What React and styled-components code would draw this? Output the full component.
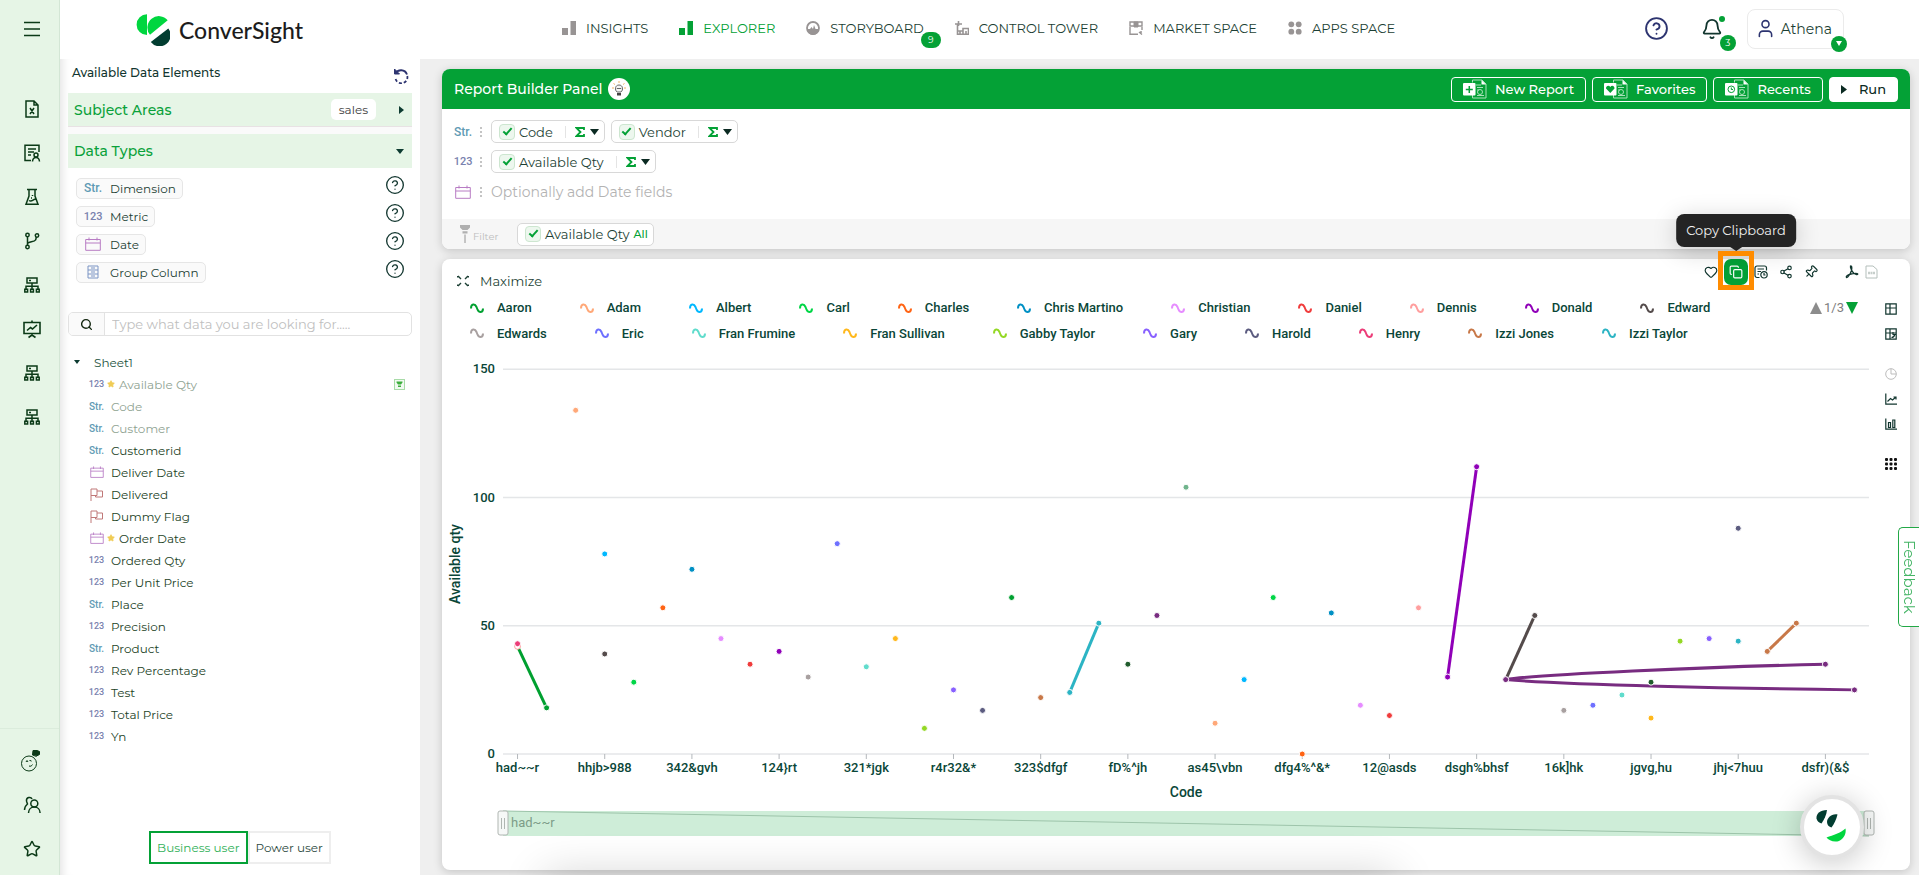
import React from "react"
import styled, { createGlobalStyle } from "styled-components"
import {
  Bell,
  CircleHelp,
  Copy,
  Heart,
  Pin,
  Search,
  Share2,
  Star,
  User,
} from "lucide-react"

const GlobalStyle = createGlobalStyle`
  *, *::before, *::after {
    box-sizing: border-box;
  }
  body {
    background: #efefef;
    color: #1c3f34;
    font-family: Montserrat, Inter, sans-serif;
    font-size: 12px;
    margin: 0;
  }
  button, input {
    color: inherit;
    font: inherit;
  }
  button {
    background: none;
    border: 0;
    cursor: pointer;
    padding: 0;
  }
  a {
    color: inherit;
    text-decoration: none;
  }
  ul {
    list-style: none;
    margin: 0;
    padding: 0;
  }
  svg {
    display: block;
    flex: none;
  }
`

const Layout = styled.div`
  display: grid;
  grid-template-columns: 60px 360px minmax(0, 1fr);
  grid-template-rows: 59px 1fr;
  min-height: 100vh;
`

/* ---------- icon rail ---------- */

const Rail = styled.nav`
  align-items: center;
  background: #e6f5e6;
  border-right: 1px solid #d3e6d5;
  color: #0b3a17;
  display: flex;
  flex-direction: column;
  grid-row: 1 / 3;
  padding: 7px 0 4px 4px;
`

const RailButton = styled.button`
  align-items: center;
  display: flex;
  height: 44px;
  justify-content: center;
  width: 44px;
`

const RailGroup = styled.div`
  display: flex;
  flex-direction: column;
  margin-top: 36px;
`

const RailFooter = styled.div`
  align-items: center;
  border-top: 1px solid #dbecdc;
  display: flex;
  flex-direction: column;
  margin: auto 0 0 -4px;
  padding: 10px 0 0 4px;
  width: 59px;
`

/* ---------- top header ---------- */

const Header = styled.header`
  align-items: center;
  background: white;
  display: flex;
  grid-column: 2 / 4;
  padding: 0 75px 0 76px;
`

const Brand = styled.a`
  align-items: center;
  color: #1c1c1c;
  display: flex;
  flex: 0 1 426px;
  font-family: Lato, sans-serif;
  font-size: 23px;
  font-weight: 500;
  gap: 9px;
  line-height: 30px;
`

const Nav = styled.nav`
  display: flex;
  font-size: 13px;
  gap: 31px;
  margin-top: -4px;
`

const NavLink = styled.a`
  align-items: center;
  color: ${({ $active }) => ($active ? `#04a136` : `#1c3f34`)};
  display: flex;
  gap: 10px;
  position: relative;
  white-space: nowrap;
  svg {
    color: ${({ $active }) => ($active ? `#04a136` : `#989494`)};
  }
`

const Badge = styled.span`
  align-items: center;
  background: #04a136;
  border-radius: 8px;
  color: white;
  display: flex;
  font-size: 9px;
  height: 16px;
  justify-content: center;
  position: absolute;
  right: ${({ $right }) => $right}px;
  top: ${({ $top }) => $top}px;
  width: ${({ $wide }) => ($wide ? 20 : 16)}px;
`

const Actions = styled.div`
  align-items: center;
  display: flex;
  gap: 32px;
  margin-left: auto;
  margin-top: -2px;
`

const IconButton = styled.button`
  color: ${({ $color }) => $color || `#12362f`};
  position: relative;
`

const Dot = styled.span`
  background: #04a136;
  border-radius: 50%;
  height: 6px;
  position: absolute;
  right: -2px;
  top: -2px;
  width: 6px;
`

const UserBox = styled.button`
  align-items: center;
  border: 1px solid #ebebeb;
  border-radius: 8px;
  color: #1c3f34;
  display: flex;
  font-size: 14px;
  gap: 5px;
  height: 40px;
  margin-left: -8px;
  padding: 0 11px 0 7px;
  position: relative;
`

/* ---------- left panel ---------- */

const Panel = styled.aside`
  background: white;
  box-shadow: inset 10px 0 10px -8px rgba(0, 0, 0, 0.12);
  display: flex;
  flex-direction: column;
  padding: 0 8px 11px;
`

const PanelTitle = styled.div`
  align-items: center;
  color: #12362f;
  display: flex;
  font-size: 12px;
  font-weight: 500;
  height: 34px;
  justify-content: space-between;
  padding: 0 3px 0 4px;
  h2 {
    font: inherit;
    margin: 0 0 8px;
  }
`

const Section = styled.button`
  align-items: center;
  background: #e6f5e6;
  color: #0aa13a;
  display: flex;
  font-size: 14px;
  font-weight: 500;
  gap: 23px;
  height: ${({ $tall }) => ($tall ? 34 : 33)}px;
  justify-content: space-between;
  padding: 0 8px 0 6px;
  text-align: left;
  width: 100%;
`

const SectionGap = styled.div`
  background: #fafafa;
  border-top: 1px solid #e8e2e4;
  height: 8px;
`

const Area = styled.span`
  background: white;
  border-radius: 5px;
  color: #3d3d3d;
  font-size: 12px;
  font-weight: 400;
  line-height: 21px;
  margin-left: auto;
  padding: 0 8px;
`

const Types = styled.ul`
  display: grid;
  gap: 6px;
  padding: 6px 7px 0 8px;
  li {
    align-items: center;
    display: flex;
    height: 22px;
    justify-content: space-between;
  }
`

const TypeChip = styled.span`
  align-items: center;
  background: #fafafa;
  border: 1px solid #e6e6e6;
  border-radius: 5px;
  display: flex;
  font-size: 12px;
  gap: 8px;
  height: 21px;
  margin-top: 6px;
  padding: 0 6px 0 7px;
`

const TypeIcon = styled.span`
  color: ${({ $color }) => $color};
  display: flex;
  flex: none;
  font-family: Roboto, sans-serif;
  font-size: ${({ $size }) => $size}px;
  font-weight: 500;
  justify-content: center;
  width: ${({ $small }) => ($small ? 15 : 18)}px;
`

const SearchBox = styled.label`
  align-items: center;
  border: 1px solid #e2e2e2;
  border-radius: 5px;
  display: flex;
  height: 24px;
  margin: 32px 0 15px;
  overflow: hidden;
  span {
    align-items: center;
    background: #fafafa;
    border-right: 1px solid #e2e2e2;
    color: #12260f;
    display: flex;
    height: 100%;
    justify-content: center;
    width: 36px;
  }
  input {
    border: 0;
    flex: 1;
    font-size: 13px;
    min-width: 0;
    outline: 0;
    padding: 0 7px;
  }
  input::placeholder {
    color: #c0c0c0;
  }
`

const Tree = styled.ul`
  li {
    align-items: center;
    color: #23431f;
    display: flex;
    gap: 7px;
    height: 22px;
    padding: 0 7px 0 21px;
  }
  li.muted {
    color: #8fa392;
  }
  li > svg:last-child {
    margin-left: auto;
  }
`

const Sheet = styled.button`
  align-items: center;
  color: #1c5341;
  display: flex;
  gap: 14px;
  height: 22px;
  padding-left: 6px;
`

const Starred = styled.span`
  align-items: center;
  display: flex;
  gap: 4px;
  margin-left: -4px;
`

const Modes = styled.div`
  display: flex;
  justify-content: center;
  margin-top: auto;
`

const Mode = styled.button`
  border: 2px solid ${({ $active }) => ($active ? `#04a136` : `#eeeeee`)};
  color: ${({ $active }) => ($active ? `#2fb058` : `#2c4a41`)};
  height: 33px;
  padding: 0 6px;
`

/* ---------- report builder ---------- */

const Main = styled.main`
  display: flex;
  flex-direction: column;
  gap: 10px;
  min-width: 0;
  padding: 10px 9px 5px 22px;
`

const Card = styled.section`
  background: white;
  border-radius: 8px;
  box-shadow: 0 2px 10px rgba(0, 0, 0, 0.18);
`

const BuilderBar = styled.div`
  align-items: center;
  background: #04a136;
  border-radius: 8px 8px 0 0;
  color: white;
  display: flex;
  font-size: 13px;
  font-weight: 500;
  gap: 6px;
  height: 40px;
  padding: 0 12px;
  h1 {
    font: inherit;
    font-size: 14px;
    margin: 0;
  }
`

const Hint = styled.button`
  align-items: center;
  background: white;
  border-radius: 50%;
  display: flex;
  height: 22px;
  justify-content: center;
  margin-right: auto;
  width: 22px;
`

const BarButton = styled.button`
  align-items: center;
  background: ${({ $solid }) => ($solid ? `white` : `transparent`)};
  border: 1px solid white;
  border-radius: 4px;
  color: ${({ $solid }) => ($solid ? `#0b2a22` : `white`)};
  display: flex;
  gap: ${({ $solid }) => ($solid ? 12 : 8)}px;
  height: 25px;
  padding: 0 11px;
`

const Fields = styled.div`
  display: grid;
  gap: 7px;
  padding: 11px 12px 16px;
`

const FieldRow = styled.div`
  align-items: center;
  display: flex;
  gap: 6px;
  height: 23px;
`

const Grip = styled.span`
  border-left: 2px dotted #c4c4c4;
  height: 10px;
  margin: 0 3px 0 2px;
`

const Chip = styled.span`
  align-items: center;
  background: white;
  border: 1px solid #d8d8d8;
  border-radius: 5px;
  color: #1c3f34;
  display: flex;
  font-size: 13px;
  gap: 4px;
  height: 23px;
  padding: 0 5px 0 7px;
  input {
    appearance: none;
    background: #edf7ee;
    border: 1px solid #cde6d0;
    border-radius: 4px;
    display: grid;
    height: 16px;
    margin: 0;
    place-items: center;
    width: 16px;
  }
  input:checked::after {
    border: solid #04a136;
    border-width: 0 2px 2px 0;
    content: "";
    height: 9px;
    margin-bottom: 3px;
    transform: rotate(42deg);
    width: 5px;
  }
`

const Aggregate = styled.button`
  align-items: center;
  border-left: 1px solid #e4e4e4;
  color: #04a136;
  display: flex;
  gap: 5px;
  height: 12px;
  margin-left: 8px;
  padding-left: 9px;
`

const DateInput = styled.input`
  border: 0;
  flex: 1;
  font-size: 14px;
  height: 23px;
  outline: 0;
  padding: 0;
  &::placeholder {
    color: #b3b3b3;
  }
`

const FilterBar = styled.div`
  align-items: center;
  background: #f6f6f6;
  border-radius: 0 0 8px 8px;
  display: flex;
  height: 30px;
  padding: 0 16px 0 17px;
`

const FilterLabel = styled.span`
  color: #bdbdbd;
  display: flex;
  font-size: 10px;
  gap: 2px;
  width: 58px;
  span {
    align-self: flex-end;
  }
`

const All = styled.span`
  color: #04a136;
  font-size: 11px;
  font-weight: 500;
`

/* ---------- chart card ---------- */

const ChartCard = styled(Card)`
  flex: 1;
  padding-bottom: 16px;
`

const ChartTop = styled.div`
  display: flex;
  height: 36px;
  justify-content: space-between;
  padding: 0 32px 0 15px;
`

const Maximize = styled.button`
  align-items: center;
  display: flex;
  font-size: 13px;
  gap: 11px;
  height: 44px;
`

const Tools = styled.div`
  align-items: center;
  color: #0f3b32;
  display: flex;
  gap: 11px;
  height: 26px;
`

const Exports = styled.div`
  display: flex;
  gap: 5px;
  margin-left: 16px;
`

const CopyButton = styled.button`
  align-items: center;
  background: #04a136;
  border-radius: 7px;
  color: white;
  display: flex;
  height: 26px;
  justify-content: center;
  margin: 0 -5px;
  position: relative;
  width: 24px;
  &::after {
    border: 5px solid #ff8c00;
    content: "";
    inset: -8px -6px -5px;
    position: absolute;
  }
`

const Tooltip = styled.span`
  background: #242424;
  border-radius: 8px;
  bottom: 38px;
  box-shadow: 0 4px 24px rgba(0, 0, 0, 0.18);
  color: #f2f2f2;
  font-size: 13px;
  left: 50%;
  line-height: 33px;
  padding: 0 10px;
  position: absolute;
  transform: translateX(-50%);
  white-space: nowrap;
  &::after {
    border: 6px solid transparent;
    border-bottom: 0;
    border-top: 4px solid #242424;
    content: "";
    left: 50%;
    margin-left: -6px;
    position: absolute;
    top: 100%;
  }
`

const ChartBody = styled.div`
  display: grid;
  grid-template-columns: minmax(0, 1fr) 34px;
`

const ChartArea = styled.div`
  color: #0a4638;
  font-family: Roboto, sans-serif;
`

const LegendBar = styled.div`
  align-items: flex-start;
  display: flex;
  gap: 10px;
  justify-content: space-between;
  padding: 0 18px 0 28px;
`

const Legend = styled.ul`
  column-gap: 48px;
  display: flex;
  flex-wrap: wrap;
  font-size: 13px;
  font-weight: 500;
  height: 51px;
  max-width: 1310px;
  overflow: hidden;
`

const LegendItem = styled.button`
  align-items: center;
  display: flex;
  gap: 13px;
  height: 25px;
  svg {
    color: ${({ $color }) => $color};
  }
`

const Pager = styled.div`
  align-items: center;
  color: #7d7d7d;
  display: flex;
  font-size: 13px;
  gap: 2px;
  height: 25px;
`

const Chart = styled.svg`
  height: auto;
  width: 100%;
  text {
    fill: #0a4638;
    font-size: 13px;
    font-weight: 500;
    text-anchor: middle;
  }
  .value {
    text-anchor: end;
  }
  .title {
    font-size: 14px;
  }
  .range {
    fill: #7d9c88;
    font-weight: 400;
    text-anchor: start;
  }
`

const ChartTypes = styled.div`
  align-items: center;
  color: #21493f;
  display: flex;
  flex-direction: column;
  gap: 13px;
  padding: 8px 4px 0 0;
`

const TypeGroup = styled.div`
  display: grid;
  gap: 13px;
  margin-bottom: 15px;
  button:disabled {
    color: #bdbdbd;
  }
`

const Feedback = styled.button`
  background: white;
  border: 1px solid #22a846;
  border-radius: 5px 0 0 5px;
  border-right: 0;
  color: #45b566;
  font-size: 15px;
  height: 100px;
  position: fixed;
  right: 0;
  top: 527px;
  width: 21px;
  writing-mode: vertical-rl;
`

const Assistant = styled.button`
  align-items: center;
  background: white;
  border: 4px solid #e3e3e3;
  border-radius: 50%;
  bottom: 16px;
  box-shadow: 0 4px 30px rgba(0, 0, 0, 0.22);
  display: flex;
  height: 64px;
  justify-content: center;
  position: fixed;
  right: 55px;
  width: 64px;
`

const BottomShade = styled.div`
  bottom: -16px;
  box-shadow: 0 0 44px 12px rgba(0, 0, 0, 0.24);
  height: 1px;
  left: 29%;
  pointer-events: none;
  position: fixed;
  right: 28%;
`

/* ---------- icons ---------- */

const Line = ({ size = 16, box = 16, width = 1.5, children }) => (
  <svg
    width={size}
    height={size}
    viewBox={`0 0 ${box} ${box}`}
    fill="none"
    stroke="currentColor"
    strokeWidth={width}
    aria-hidden="true"
  >
    {children}
  </svg>
)

const Caret = ({ dir = `down`, w = 8, h = 5, color = `#0d3b30` }) => {
  const d = {
    down: `M0 0H${w}L${w / 2} ${h}Z`,
    up: `M0 ${h}H${w}L${w / 2} 0Z`,
    right: `M0 0L${w} ${h / 2}L0 ${h}Z`,
  }[dir]
  return (
    <svg width={w} height={h} aria-hidden="true"><path d={d} fill={color} /></svg>
  )
}

const FileXIcon = () => (
  <Line size={18} box={18}>
    <path d="M3 1h8l4 4v12H3ZM11 1v4h4M7 8l4 6M11 8l-4 6" />
  </Line>
)

const ReportIcon = () => (
  <Line size={18} box={18}>
    <path d="M8 16.500H2V1.200h14V8M5 5h8M5 8h6M5 11h3" />
    <circle cx="13" cy="11" r="2" />
    <path d="M9.500 17.500c.2-2.500 1.500-4 3.500-4s3.300 1.500 3.500 4" />
  </Line>
)

const FlaskIcon = () => (
  <Line size={18} box={18}>
    <path d="M4 1.500h10M6 2v6L3 16.300h12L12 8V2M6 12.500c3 2 4-1.500 7-1.500" />
    <path d="M9.500 7v1M8 10h1" />
  </Line>
)

const BranchIcon = () => (
  <Line size={18} box={18}>
    <circle cx="4.500" cy="3" r="1.700" />
    <circle cx="4.500" cy="15" r="1.700" />
    <circle cx="14" cy="3.500" r="1.700" />
    <path d="M4.500 5v8M4.500 11.500c.5-2 7-1.500 8-3.500.6-1 .7-2 .8-3" />
  </Line>
)

const NetworkIcon = () => (
  <Line size={18} box={18}>
    <path d="M4 2h10v5H4ZM6 4.500h2M9 7v6M3 13v-2.800h12V13" />
    <path d="M1.800 13.200h2.800v2.800H1.800ZM7.600 13.200h2.800v2.800H7.600ZM13.400 13.200h2.800v2.800h-2.800Z" />
  </Line>
)

const BoardIcon = () => (
  <Line size={20} box={20} width={1.6}>
    <path d="M2 3.500h16v11H2ZM10 1.500v2M5 11.500l3.500-3 2 1.500L15 6M10 14.500v2M6.500 18.500l3.500-2.500 3.500 2.500" />
  </Line>
)

const RobotIcon = () => (
  <Line size={24} box={24} width={1}>
    <circle cx="9" cy="14.500" r="7.500" />
    <path d="M6 13l1-1.500 1 1.500M9.500 12l1-1 .7 1.500M9 17c1.500.6 2.800 0 3.500-1.500" />
    <path d="M12.500 6l.5-4.500h4l2.500 1v3l-3 1.500M12.500 6l4 1.500" fill="currentColor" />
  </Line>
)

const PeopleIcon = () => (
  <Line size={18} box={18}>
    <circle cx="11.300" cy="7.500" r="3.500" />
    <path d="M5.500 17c0-3.500 2.500-6 5.800-6s5.800 2.500 5.800 6M9 3c-1-2.500-6-2-5.500 2 .2 1.500 1 2.500 1 3C2 10 1.500 12 1.500 14" />
  </Line>
)

const CalendarIcon = ({ small }) => (
  <svg width={small ? 14 : 16} height={small ? 12 : 14} viewBox="0 0 16 14" fill="none" stroke="#b87cc4" aria-hidden="true">
    <path d="M.7 2.500h14.600v10.800H.7ZM.7 6h14.600M4 .5v3M12 .5v3" />
  </svg>
)

const FlagIcon = () => (
  <svg width="14" height="13" viewBox="0 0 14 13" fill="none" stroke="#c07878" aria-hidden="true">
    <path d="M1 13V1h6v6.500H1M7 3h5.500v6H5.500V7.500" />
  </svg>
)

const GroupIcon = () => (
  <svg width="12" height="14" viewBox="0 0 12 14" fill="none" stroke="#7b94c4" aria-hidden="true">
    <path d="M1 1h10v12H1ZM1 5h10M1 9h10M4 3h4M4 7h4M4 11h4" />
  </svg>
)

const ResetIcon = () => (
  <svg width="16" height="16" viewBox="0 0 16 16" fill="none" stroke="#2d3470" strokeWidth="1.800" aria-hidden="true">
    <path d="M2 5.500C5 1 12 1 14 6.500" />
    <path d="M14.300 8A6 6 0 0 1 2.500 10.500" strokeDasharray="3 2" />
    <path d="M1.500 1v5h5Z" fill="#2d3470" strokeWidth="1" />
  </svg>
)

const FunnelIcon = () => (
  <svg width="12" height="18" viewBox="0 0 12 18" fill="#b0b0b0" aria-hidden="true">
    <path d="M1 0h10v2.500L8.500 5h-5L1 2.500ZM3.500 6.200h5v2.300H3.500ZM5.300 9.500h1.400V18H5.300Z" />
  </svg>
)

const BulbIcon = () => (
  <svg width="14" height="16" viewBox="0 0 14 16" fill="none" aria-hidden="true">
    <path d="M7 0v2M1.500 2.500l1.500 1M12.500 2.500L11 3.500M0 7h2M12 7h2" stroke="#f0b469" />
    <path d="M5 11C2.500 9 3 4 7 4s4.500 5 2 7Z" stroke="#666" fill="#f4f4f4" />
    <path d="M4.800 7.500h4.400" stroke="#666" />
    <path d="M5 12h4v2.500H5Z" fill="#444" />
  </svg>
)

// two overlapping sheets, the front one carries a small mark
const SheetsIcon = ({ children }) => (
  <svg width="24" height="20" viewBox="0 0 24 20" fill="none" aria-hidden="true">
    <path d="M9.500 3.500V1H19l4 4v14H9.500v-3" stroke="#a9e0b9" />
    <path d="M18.500 1v4.500H23Z" fill="white" />
    <path d="M13 6h5M14 8.500h6M14 11h2M14 16.500h7" stroke="#a9e0b9" />
    <circle cx="17" cy="13" r="2.500" stroke="#a9e0b9" />
    <rect x="0" y="4" width="12.500" height="12.500" rx="1" fill="white" />
    {children}
  </svg>
)

const Sine = () => (
  <svg width="14" height="10" viewBox="0 0 14 10" fill="none" stroke="currentColor" strokeWidth="2" aria-hidden="true">
    <path d="M1 5.500C1 .5 5 .5 6.500 4C8 8 8.500 9 10.300 9C12.200 9 13 7.500 13 5.500" />
  </svg>
)

const LogoMark = () => (
  <svg width="34" height="32" viewBox="0 0 34 32" aria-hidden="true">
    <path d="M11 .3A10.400 10.400 0 0 0 11 21.100Z" fill="#00d63f" />
    <path d="M14 20.800A11 11 0 0 1 31.700 6.300Z" fill="#00d63f" />
    <path d="M14.800 28A11 11 0 0 0 32.300 14.500Z" fill="#023d31" />
  </svg>
)

const AssistantMark = () => (
  <svg width="32" height="34" viewBox="0 0 32 34" aria-hidden="true">
    <path d="M11 0C4 0 0 4 .5 8.500 1 11 3 13 5.500 13.500 8 10 10.500 5 11 0Z" fill="#023d31" />
    <path d="M21.500 4.500C15.500 3.500 11 8 11 12c0 3 2 5 4.500 5.500C18 14 20.500 9 21.500 4.500Z" fill="#023d31" />
    <path d="M10.500 27.500C17.500 25 24.500 23 29.500 18.500c1 5-1.500 10-6.500 12.500-5 1.500-10.500-.5-12.500-3.500Z" fill="#00d63f" />
  </svg>
)

const BarsIcon = () => (
  <svg width="14" height="14" viewBox="0 0 14 14" fill="currentColor" aria-hidden="true">
    <path d="M0 7h6v7H0ZM8.500 0H14v14H8.500Z" />
  </svg>
)

const GaugeIcon = () => (
  <svg width="14" height="14" viewBox="0 0 14 14" fill="none" aria-hidden="true">
    <circle cx="7" cy="7" r="6" stroke="currentColor" strokeWidth="1.800" />
    <path d="M1 8h3l1.500-2L7 8l1-4 1.500 4H13A6 6 0 0 1 1 8Z" fill="currentColor" />
  </svg>
)

const TowerIcon = () => (
  <svg width="14" height="14" viewBox="0 0 14 14" fill="none" stroke="currentColor" aria-hidden="true">
    <path d="M0 3h7M3.500 0v5M2.500 3v10.300h11V7.500H8V10H2.500M5 10v3M8 10v3M11 10v3" strokeWidth="1.600" />
  </svg>
)

const MarketIcon = () => (
  <svg width="14" height="14" viewBox="0 0 14 14" fill="none" stroke="currentColor" aria-hidden="true">
    <path d="M1 6v7.300h8M1 1h12v4H1ZM13 6v3M10 11l3 2.500M13 11h-2" strokeWidth="1.400" />
    <path d="M5 1h4v5H5Z" fill="currentColor" />
  </svg>
)

const AppsIcon = () => (
  <svg width="14" height="14" viewBox="0 0 14 14" fill="currentColor" aria-hidden="true">
    <circle cx="3.300" cy="3.300" r="2.900" />
    <circle cx="10.700" cy="3.300" r="2.900" />
    <circle cx="3.300" cy="10.700" r="2.900" />
    <circle cx="10.700" cy="10.700" r="2.900" />
  </svg>
)

const CollapseIcon = () => (
  <Line size={12} box={12} width={1.4}>
    <path d="M1 1l3 3M11 1L8 4M1 11l3-3M11 11L8 8" />
    <path d="M.7 2.500V1M11.300 2.500V1M.7 9.500V11M11.300 9.500V11" />
  </Line>
)

const ScheduleIcon = () => (
  <Line size={14} box={14} width={1.2}>
    <path d="M5.500 12.500H3a2 2 0 0 1-2-2V3a2 2 0 0 1 2-2h7.500a2 2 0 0 1 2 2v2.500M3.500 4H10M3.500 6.500H7M3.500 9H5" />
    <circle cx="10" cy="9.800" r="3.200" />
    <path d="M10 8v2h1.500" />
  </Line>
)

const PdfIcon = () => (
  <Line size={14} box={14} width={1.3}>
    <path d="M5.500 1C7 .5 7 3 6.500 5.500 5.500 8.500 3 12.800 1.500 12.500.5 11.500 3 9.500 6 9c3-.7 6.500-.8 6.800 0 .2 1-2.300.6-4-.7C7 6.500 5 2.500 5.500 1Z" />
  </Line>
)

const SvgFileIcon = () => (
  <Line size={14} box={14} width={1}>
    <path d="M2 1h7l4 3.500V13H2Z" stroke="#b4bfbb" />
    <path d="M4 8h7" stroke="#c6cecb" strokeWidth="2.500" strokeDasharray="2 .5" />
  </Line>
)

const TableIcon = ({ edit }) => (
  <Line size={12} box={12} width={1.2}>
    <path d="M.8.8h10.400v10.400H.8ZM.8 5h10.400M5 .8v10.400" />
    {edit && <path d="M6.500 9.500c2 0 3-1.500 3.500-3.500M8 4v2.500h3" />}
  </Line>
)

const PieIcon = () => (
  <Line size={12} box={12} width={1}>
    <circle cx="6" cy="6" r="5.300" />
    <path d="M6 .7V6h5.300" />
  </Line>
)

const TrendIcon = () => (
  <Line size={12} box={12} width={1.2}>
    <path d="M.8.500v10.700H12M2.500 8.500l3-3 2 1.500L11 4M8.500 4H11v2.500" />
  </Line>
)

const ColumnsIcon = () => (
  <Line size={12} box={12} width={1.2}>
    <path d="M.8.500v10.700H12M3.500 4.500h2v5h-2ZM7.800 2h2v7.500h-2Z" />
  </Line>
)

const DotsIcon = () => (
  <svg width="12" height="12" viewBox="0 0 12 12" fill="#111" aria-hidden="true">
    {[1.5, 6, 10.5].map(y => [1.5, 6, 10.5].map(x => (
      <rect key={`${x}-${y}`} x={x - 1.5} y={y - 1.5} width="3" height="3" rx="1" />
    )))}
  </svg>
)

const DataType = ({ type, small }) => {
  if (type === `str`) {
    return <TypeIcon $small={small} $size={small ? 10 : 12} $color="#5f9bb4">Str.</TypeIcon>
  }
  if (type === `num`) {
    return <TypeIcon $small={small} $size={small ? 9 : 11} $color="#7a82ae">123</TypeIcon>
  }
  return (
    <TypeIcon $small={small}>
      {type === `date` && <CalendarIcon small={small} />}
      {type === `flag` && <FlagIcon />}
      {type === `group` && <GroupIcon />}
    </TypeIcon>
  )
}

/* ---------- data ---------- */

const navItems = [
  { label: `INSIGHTS`, icon: BarsIcon },
  { label: `EXPLORER`, icon: BarsIcon, active: true },
  { label: `STORYBOARD`, icon: GaugeIcon, badge: 9 },
  { label: `CONTROL TOWER`, icon: TowerIcon },
  { label: `MARKET SPACE`, icon: MarketIcon },
  { label: `APPS SPACE`, icon: AppsIcon },
]

const railItems = [
  [`Files`, FileXIcon],
  [`Reports`, ReportIcon],
  [`Lab`, FlaskIcon],
  [`Branches`, BranchIcon],
  [`Datasets`, NetworkIcon],
  [`Presentations`, BoardIcon],
  [`Connections`, NetworkIcon],
  [`Workflows`, NetworkIcon],
]

const dataTypes = [
  [`Dimension`, `str`],
  [`Metric`, `num`],
  [`Date`, `date`],
  [`Group Column`, `group`],
]

const columns = [
  { name: `Available Qty`, type: `num`, starred: true, muted: true, filtered: true },
  { name: `Code`, type: `str`, muted: true },
  { name: `Customer`, type: `str`, muted: true },
  { name: `Customerid`, type: `str` },
  { name: `Deliver Date`, type: `date` },
  { name: `Delivered`, type: `flag` },
  { name: `Dummy Flag`, type: `flag` },
  { name: `Order Date`, type: `date`, starred: true },
  { name: `Ordered Qty`, type: `num` },
  { name: `Per Unit Price`, type: `num` },
  { name: `Place`, type: `str` },
  { name: `Precision`, type: `num` },
  { name: `Product`, type: `str` },
  { name: `Rev Percentage`, type: `num` },
  { name: `Test`, type: `num` },
  { name: `Total Price`, type: `num` },
  { name: `Yn`, type: `num` },
]

const colors = {
  Aaron: `#00a030`,
  Adam: `#ffa878`,
  Albert: `#00b8ff`,
  Carl: `#00d646`,
  Charles: `#ff6414`,
  "Chris Martino": `#0090c4`,
  Christian: `#e68cff`,
  Daniel: `#f03c3c`,
  Dennis: `#ff9e9e`,
  Donald: `#9000b8`,
  Edward: `#544b4b`,
  Edwards: `#a8a0a0`,
  Eric: `#6e70ff`,
  "Fran Frumine": `#60dccc`,
  "Fran Sullivan": `#ffb81c`,
  "Gabby Taylor": `#94d824`,
  Gary: `#8860ff`,
  Harold: `#5c5c80`,
  Henry: `#ec3c78`,
  "Izzi Jones": `#c87848`,
  "Izzi Taylor": `#2cb4c4`,
}

const plum = `#782c80`
const pine = `#205c2c`

// [category index, value, colour, ring]
const points = [
  [0, 42, `#ffffff`, colors.Dennis], [0, 43, colors.Henry], [1, 18, colors.Aaron],
  [2, 134, colors.Adam], [3, 78, colors.Albert], [3, 39, colors.Edward],
  [4, 28, colors.Carl], [5, 57, colors.Charles], [6, 72, colors[`Chris Martino`]],
  [7, 45, colors.Christian], [8, 35, colors.Daniel], [9, 40, colors.Donald],
  [10, 30, colors.Edwards], [11, 82, colors.Eric], [12, 34, colors[`Fran Frumine`]],
  [13, 45, colors[`Fran Sullivan`]], [14, 10, colors[`Gabby Taylor`]], [15, 25, colors.Gary],
  [16, 17, colors.Harold], [17, 61, colors.Aaron], [18, 22, colors[`Izzi Jones`]],
  [19, 24, colors[`Izzi Taylor`]], [20, 51, colors[`Izzi Taylor`]], [21, 35, pine],
  [22, 54, plum], [23, 104, `#70b48c`], [24, 12, colors.Adam], [25, 29, colors.Albert],
  [26, 61, colors.Carl], [27, 0, colors.Charles], [28, 55, colors[`Chris Martino`]],
  [29, 19, colors.Christian], [30, 15, colors.Daniel], [31, 57, colors.Dennis],
  [32, 30, colors.Donald], [33, 112, colors.Donald], [34, 29, plum], [35, 54, colors.Edward],
  [36, 17, colors.Edwards], [37, 19, colors.Eric], [38, 23, colors[`Fran Frumine`]],
  [39, 14, colors[`Fran Sullivan`]], [39, 28, pine], [40, 44, colors[`Gabby Taylor`]],
  [41, 45, colors.Gary], [42, 44, colors[`Izzi Taylor`]], [42, 88, colors.Harold],
  [43, 40, colors[`Izzi Jones`]], [44, 51, colors[`Izzi Jones`]], [45, 35, plum], [46, 25, plum],
]

const lines = [
  [[0, 42], [1, 18], colors.Aaron],
  [[19, 24], [20, 51], colors[`Izzi Taylor`]],
  [[32, 30], [33, 112], colors.Donald],
  [[34, 29], [35, 54], colors.Edward],
  [[43, 40], [44, 51], colors[`Izzi Jones`]],
]

const categories = [
  `had~~r`, `hhjb>988`, `342&gvh`, `124}rt`, `321*jgk`, `r4r32&*`, `323$dfgf`, `fD%^jh`,
  `as45\\vbn`, `dfg4%^&*`, `12@asds`, `dsgh%bhsf`, `16k]hk`, `jgvg,hu`, `jhj<7huu`, `dsfr)(&$`,
]

const left = 61
const right = 1427
const step = (right - left) / 47
const px = i => left + step * (i + 0.5)
const py = v => 408 - v * 2.565

const ScatterChart = () => (
  <Chart viewBox="0 0 1434 508" role="img" aria-label="Available qty by Code">
    {[150, 100, 50, 0].map(v => (
      <g key={v}>
        <path d={`M${left} ${py(v)}H${right}`} stroke="#e4e6e8" strokeWidth="1.500" />
        <text className="value" x="53" y={py(v) + 4}>{v}</text>
      </g>
    ))}
    {categories.map((name, i) => (
      <g key={name}>
        <path d={`M${px(i * 3)} 408v5`} stroke="#b4b8bc" />
        <text x={px(i * 3)} y="426">{name}</text>
      </g>
    ))}
    <text className="title" x="744" y="451">Code</text>
    <text className="title" transform="translate(18 218) rotate(-90)">Available qty</text>
    {lines.map(([a, b, color]) => (
      <path
        key={color}
        d={`M${px(a[0])} ${py(a[1])}L${px(b[0])} ${py(b[1])}`}
        stroke={color}
        strokeWidth="3"
      />
    ))}
    <path
      d={`M${px(45)} ${py(35)}C${px(41)} ${py(34)} ${px(35)} ${py(31)} ${px(34)} ${py(29)}C${px(36)} ${py(27)} ${px(42)} ${py(25.5)} ${px(46)} ${py(25)}`}
      fill="none"
      stroke={plum}
      strokeWidth="3"
    />
    {points.map(([i, v, color, ring]) => (
      <circle
        key={`${i}-${v}`}
        cx={px(i)}
        cy={py(v)}
        r="3"
        fill={color}
        stroke={ring || `white`}
      />
    ))}
    <rect x={left} y="465" width={right - left} height="25" fill="#ceedd8" />
    <path d={`M${left} 465L${right} 490`} stroke="#9dc4aa" />
    <text className="range" x="69" y="481">had~~r</text>
    {[left - 5, right - 5].map(x => (
      <g key={x} stroke="#b0b6b2">
        <rect x={x} y="465" width="10" height="24" rx="2" fill="#f6f8f7" />
        <path d={`M${x + 3.5} 472v11M${x + 6.5} 472v11`} />
      </g>
    ))}
  </Chart>
)

const Field = ({ name }) => (
  <Chip>
    <input type="checkbox" defaultChecked aria-label={name} />
    {name}
    <Aggregate aria-label={`Aggregate ${name}`}>
      <Line size={10} box={10} width={1.8}>
        <path d="M9 3V1H1.500L5.500 5L1.500 9H9V7" />
      </Line>
      <Caret w={9} h={6} color="#0b2a22" />
    </Aggregate>
  </Chip>
)

const App = () => (
  <Layout>
    <GlobalStyle />
    <Rail aria-label="Workspace">
      <RailButton aria-label="Menu">
        <Line>
          <path d="M0 1.500h16M0 8h16M0 14.500h16" />
        </Line>
      </RailButton>
      <RailGroup>
        {railItems.map(([label, Icon]) => (
          <RailButton key={label} aria-label={label}><Icon /></RailButton>
        ))}
      </RailGroup>
      <RailFooter>
        <RailButton aria-label="Athena bot"><RobotIcon /></RailButton>
        <RailButton aria-label="Users"><PeopleIcon /></RailButton>
        <RailButton aria-label="Favorites"><Star size={18} strokeWidth={2} /></RailButton>
      </RailFooter>
    </Rail>

    <Header>
      <Brand href="#home"><LogoMark />ConverSight</Brand>
      <Nav aria-label="main navigation">
        {navItems.map(({ label, icon: Icon, active, badge }) => (
          <NavLink key={label} href={`#${label}`} $active={active}>
            <Icon />
            {label}
            {badge && <Badge $wide $right={-17} $top={12}>{badge}</Badge>}
          </NavLink>
        ))}
      </Nav>
      <Actions>
        <IconButton $color="#2d3470" aria-label="Help"><CircleHelp size={25} strokeWidth={1.8} /></IconButton>
        <IconButton aria-label="Notifications">
          <Bell size={22} strokeWidth={2} />
          <Dot />
          <Badge $right={-13} $top={17}>3</Badge>
        </IconButton>
        <UserBox>
          <User size={21} strokeWidth={1.8} color="#2d3470" />
          Athena
          <Badge $right={-4} $top={26}><Caret w={6} h={5} color="white" /></Badge>
        </UserBox>
      </Actions>
    </Header>

    <Panel>
      <PanelTitle>
        <h2>Available Data Elements</h2>
        <IconButton aria-label="Reset"><ResetIcon /></IconButton>
      </PanelTitle>
      <Section>
        Subject Areas
        <Area>sales</Area>
        <Caret dir="right" w={5} h={8} />
      </Section>
      <SectionGap />
      <Section $tall>
        Data Types
        <Caret />
      </Section>
      <Types>
        {dataTypes.map(([label, type]) => (
          <li key={label}>
            <TypeChip><DataType type={type} />{label}</TypeChip>
            <IconButton aria-label={`About ${label}`}><CircleHelp size={20} strokeWidth={1.6} /></IconButton>
          </li>
        ))}
      </Types>
      <SearchBox>
        <span><Search size={13} strokeWidth={2.6} /></span>
        <input aria-label="Search data elements" placeholder="Type what data you are looking for....." />
      </SearchBox>
      <Sheet><Caret w={6} h={4} />Sheet1</Sheet>
      <Tree>
        {columns.map(({ name, type, starred, muted, filtered }) => (
          <li key={name} className={muted ? `muted` : undefined}>
            <DataType type={type} small />
            {starred ? (
              <Starred><Star size={8} fill="#f0cc55" stroke="#f0cc55" />{name}</Starred>
            ) : name}
            {filtered && (
              <svg width="11" height="11" viewBox="0 0 11 11" aria-hidden="true">
                <rect x=".5" y=".5" width="10" height="10" fill="#f2faf2" stroke="#a8dba8" />
                <path d="M2.500 2.500h6v1L7 5.500H4L2.500 3.500ZM4 6.500h3V8H4Z" fill="#3cae3c" />
              </svg>
            )}
          </li>
        ))}
      </Tree>
      <Modes>
        <Mode $active>Business user</Mode>
        <Mode>Power user</Mode>
      </Modes>
    </Panel>

    <Main>
      <Card>
        <BuilderBar>
          <h1>Report Builder Panel</h1>
          <Hint aria-label="Tips"><BulbIcon /></Hint>
          <BarButton>
            <SheetsIcon><path d="M6.300 7v7M2.800 10.500h7" stroke="#04a136" strokeWidth="1.500" /></SheetsIcon>
            New Report
          </BarButton>
          <BarButton>
            <SheetsIcon><path d="M6.300 14L2 9.500C2 6.500 5 6 6.300 8 7.500 6 10.500 6.500 10.500 9.500Z" fill="#04a136" /></SheetsIcon>
            Favorites
          </BarButton>
          <BarButton>
            <SheetsIcon>
              <circle cx="6.300" cy="10.300" r="3.300" stroke="#04a136" />
              <path d="M6.300 8.500v2H8" stroke="#04a136" />
            </SheetsIcon>
            Recents
          </BarButton>
          <BarButton $solid><Caret dir="right" w={6} h={9} color="#0b2a22" />Run</BarButton>
        </BuilderBar>
        <Fields>
          <FieldRow>
            <DataType type="str" /><Grip />
            <Field name="Code" />
            <Field name="Vendor" />
          </FieldRow>
          <FieldRow>
            <DataType type="num" /><Grip />
            <Field name="Available Qty" />
          </FieldRow>
          <FieldRow>
            <DataType type="date" /><Grip />
            <DateInput aria-label="Date fields" placeholder="Optionally add Date fields" />
          </FieldRow>
        </Fields>
        <FilterBar>
          <FilterLabel><FunnelIcon /><span>Filter</span></FilterLabel>
          <Chip>
            <input type="checkbox" defaultChecked aria-label="Filter by Available Qty" />
            Available Qty
            <All>All</All>
          </Chip>
        </FilterBar>
      </Card>

      <ChartCard>
        <ChartTop>
          <Maximize><CollapseIcon />Maximize</Maximize>
          <Tools>
            <IconButton aria-label="Favorite"><Heart size={14} /></IconButton>
            <CopyButton aria-label="Copy">
              <Copy size={14} />
              <Tooltip role="tooltip">Copy Clipboard</Tooltip>
            </CopyButton>
            <IconButton aria-label="Schedule"><ScheduleIcon /></IconButton>
            <IconButton aria-label="Share"><Share2 size={14} /></IconButton>
            <IconButton aria-label="Pin"><Pin size={14} transform="rotate(45)" /></IconButton>
            <Exports>
              <IconButton aria-label="Export PDF"><PdfIcon /></IconButton>
              <IconButton aria-label="Export SVG"><SvgFileIcon /></IconButton>
            </Exports>
          </Tools>
        </ChartTop>
        <ChartBody>
          <ChartArea>
            <LegendBar>
              <Legend>
                {Object.keys(colors).map(name => (
                  <li key={name}>
                    <LegendItem $color={colors[name]}><Sine />{name}</LegendItem>
                  </li>
                ))}
              </Legend>
              <Pager>
                <button aria-label="Previous"><Caret dir="up" w={12} h={12} color="#8c8c8c" /></button>
                1/3
                <button aria-label="Next"><Caret w={12} h={12} color="#04a136" /></button>
              </Pager>
            </LegendBar>
            <ScatterChart />
          </ChartArea>
          <ChartTypes>
            <TypeGroup>
              <IconButton aria-label="Table"><TableIcon /></IconButton>
              <IconButton aria-label="Pivot table"><TableIcon edit /></IconButton>
            </TypeGroup>
            <TypeGroup>
              <IconButton aria-label="Pie chart" disabled><PieIcon /></IconButton>
              <IconButton aria-label="Line chart"><TrendIcon /></IconButton>
              <IconButton aria-label="Bar chart"><ColumnsIcon /></IconButton>
            </TypeGroup>
            <IconButton aria-label="More charts"><DotsIcon /></IconButton>
          </ChartTypes>
        </ChartBody>
      </ChartCard>
    </Main>

    <BottomShade />
    <Feedback>Feedback</Feedback>
    <Assistant aria-label="Open assistant"><AssistantMark /></Assistant>
  </Layout>
)

export default App
